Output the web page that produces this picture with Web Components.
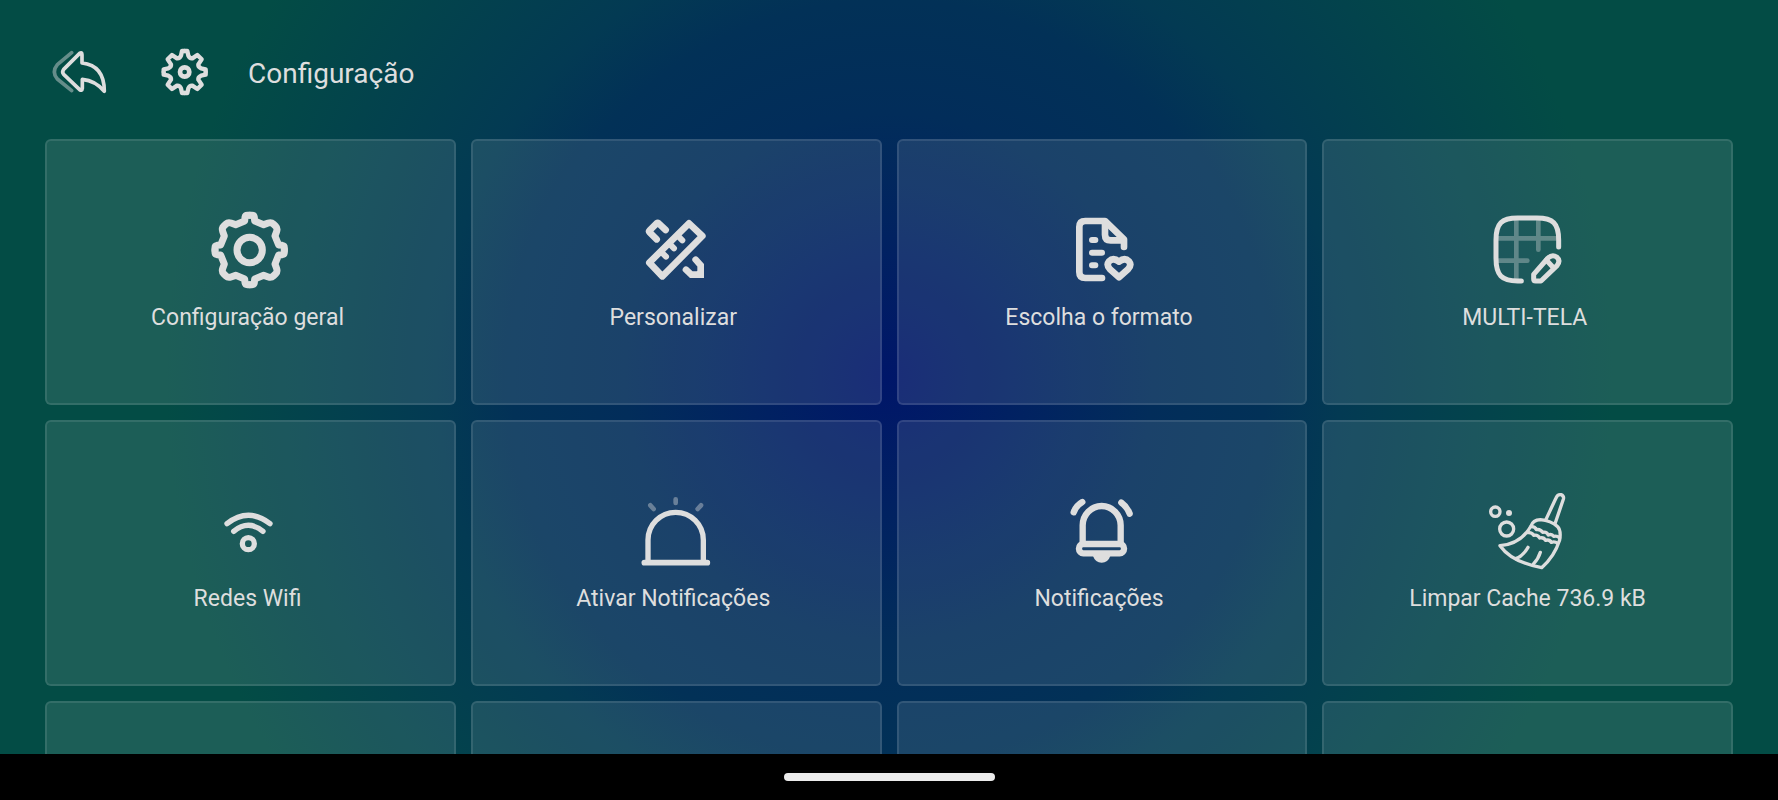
<!DOCTYPE html>
<html lang="pt">
<head>
<meta charset="utf-8">
<meta name="viewport" content="width=device-width, initial-scale=1">
<title>Configuração</title>
<style>
    body {
        margin: 0;
        background: #000;
        color: #dedede;
        font-family: Roboto, "Liberation Sans", sans-serif;
    }
    svg {
        display: block;
        width: 100%;
        height: 100%;
        fill: none;
        stroke: currentColor;
        stroke-linecap: round;
        stroke-linejoin: round;
    }
</style>
</head>
<body>
<settings-screen>
    <page-header slot="header" heading="Configuração"></page-header>

    <settings-tile label="Configuração geral ">
        <svg viewBox="61 60 240 240" stroke-width="21">
            <path id="cog" d="M180 76H187Q193 76 194 82L195 93L222 104L236 99Q245 96 251 102L258 109Q264 115 261 124L256 138L267 165L278 166Q284 167 284 173V180"/>
            <use href="#cog" transform="rotate(90 180 180)"/>
            <use href="#cog" transform="rotate(180 180 180)"/>
            <use href="#cog" transform="rotate(270 180 180)"/>
            <circle cx="180" cy="180" r="38"/>
        </svg>
    </settings-tile>

    <settings-tile label="Personalizar ">
        <svg viewBox="48 30 240 240" stroke-width="20">
            <path d="M207 70L247 108L127 229L88 188Z"/>
            <path d="M124 156l14 14M148 131l14 14M173 107l14 14" stroke-width="18"/>
            <path d="M137 90L116 70Q113 68 110 70L89 91Q86 94 89 97L110 118"/>
            <path d="M227 179L242 196V224H214L198 209" stroke-linejoin="miter"/>
            <path d="M243 208V225H226Z" stroke-width="8"/>
        </svg>
    </settings-tile>

    <settings-tile label="Escolha o formato ">
        <svg viewBox="36 30 240 240" stroke-width="20">
            <path d="M156 234H106Q88 234 88 216V81Q88 63 106 63H165L222 118V141"/>
            <path d="M165 66V104Q165 121 182 121H220"/>
            <path d="M126 120h10M126 158h30M126 196h10" stroke-width="18"/>
            <path d="M207 232L180 208Q168 195 177 184Q190 171 207 185Q224 171 237 184Q246 195 234 208Z"/>
        </svg>
    </settings-tile>

    <settings-tile label="MULTI-TELA ">
        <svg viewBox="53 30 240 240" stroke-width="15">
            <g opacity=".35" stroke-width="14">
                <path d="M138 62V236"/>
                <path d="M204 62V149"/>
                <path d="M84 115H258"/>
                <path d="M84 182H171"/>
            </g>
            <path d="M265 141V120C265 70 248 54 200 54H142C94 54 77 70 77 120V175C77 226 94 243 142 243H153"/>
            <path d="M190 223V237Q190 243 196 243H212L260 197Q272 182 259 171Q246 162 233 174Z"/>
            <path d="M228 180L250 204"/>
        </svg>
    </settings-tile>

    <settings-tile label="Redes Wifi ">
        <svg viewBox="31 3 240 240" stroke-width="16">
            <path d="M82 101Q146 51 211 101"/>
            <path d="M102 124Q146 88 190 124"/>
            <circle cx="146" cy="161" r="18"/>
        </svg>
    </settings-tile>

    <settings-tile label="Ativar Notificações ">
        <svg viewBox="48 33 240 240" stroke-width="16">
            <path d="M84 245V180A83 83 0 0 1 250 180V245"/>
            <path d="M73 248H262" stroke-width="17"/>
            <path d="M167 58V69M91 76L101 87M243 76L233 87" stroke-width="14" opacity=".4"/>
        </svg>
    </settings-tile>

    <settings-tile label="Notificações ">
        <svg viewBox="36 33 240 240" stroke-width="19">
            <path d="M98 188V136A57 58 0 0 1 212 136V188"/>
            <rect x="87" y="192" width="135" height="28" rx="13"/>
            <path d="M129 228Q136 248 155 248T181 228Z" fill="currentColor" stroke="none"/>
            <path d="M71 97Q78 77 97 66"/>
            <path d="M214 68Q232 81 239 101"/>
        </svg>
    </settings-tile>

    <settings-tile label="Limpar Cache 736.9 kB">
        <svg viewBox="53 33 240 240" stroke-width="10">
            <path d="M227 118L257 54Q262 42 272 44Q282 48 279 58L254 131"/>
            <path d="M182 138Q188 120 210 119Q242 122 262 140Q273 152 268 180Q252 230 214 263Q124 246 89 197Q152 192 182 138"/>
            <path d="M182 140Q194 139 198 149Q209 146 217 157Q229 154 234 165Q244 160 250 169Q260 166 268 174"/>
            <path d="M172 158Q185 156 190 166Q202 163 208 174Q220 171 226 181Q237 177 243 187Q253 183 262 190"/>
            <path d="M173 202Q158 228 136 236M210 217Q204 237 190 251"/>
            <circle cx="75" cy="95" r="14"/>
            <circle cx="109" cy="147" r="21"/>
            <circle cx="116" cy="99" r="9" fill="currentColor" stroke="none"/>
        </svg>
    </settings-tile>

    <settings-tile></settings-tile>
    <settings-tile></settings-tile>
    <settings-tile></settings-tile>
    <settings-tile></settings-tile>
</settings-screen>

<script>
class SettingsScreen extends HTMLElement {

    constructor() {
        super();
        this.attachShadow({ mode: 'open' });
        this.shadowRoot.innerHTML = `
            <style>
                :host {
                    display: flex;
                    flex-direction: column;
                    height: 100vh;
                }
                main {
                    flex: 1;
                    min-height: 0;
                    overflow: hidden;
                    background: radial-gradient(circle closest-side at center,
                        #001669 0%, #022d5a 70%, #023157 100%, #033a53 120%, #034c45 192%);
                }
                .grid {
                    display: grid;
                    grid-template-columns: repeat(4, 1fr);
                    grid-auto-rows: 266px;
                    gap: 15px;
                    padding: 0 45px;
                }
                footer {
                    flex: none;
                    display: flex;
                    justify-content: center;
                    align-items: center;
                    height: 46px;
                    background: #000;
                }
                .pill {
                    width: 211px;
                    height: 8px;
                    border-radius: 4px;
                    background: #ececec;
                }
            </style>
            <main>
                <slot name="header"></slot>
                <div class="grid"><slot></slot></div>
            </main>
            <footer><div class="pill"></div></footer>`;
    }
}

class PageHeader extends HTMLElement {

    constructor() {
        super();
        this.attachShadow({ mode: 'open' });
        this.shadowRoot.innerHTML = `
            <style>
                :host {
                    display: flex;
                    align-items: center;
                    box-sizing: border-box;
                    height: 139px;
                    padding: 5px 50px 0;
                }
                button {
                    padding: 0;
                    border: 0;
                    background: none;
                    color: inherit;
                    cursor: pointer;
                }
                svg {
                    display: block;
                    width: 60px;
                    height: 60px;
                    fill: none;
                    stroke: currentColor;
                    stroke-linecap: round;
                    stroke-linejoin: round;
                }
                .cog {
                    margin: 0 33px 0 45px;
                }
                h1 {
                    margin: 0;
                    padding-top: 2px;
                    font-size: 28px;
                    font-weight: 400;
                }
            </style>
            <button aria-label="Voltar">
                <svg viewBox="60 36 180 180" stroke-width="11">
                    <path d="M125 68L82 104Q64 126 82 147L125 182" opacity=".45"/>
                    <path d="M149 70Q156 65 156 74V99C205 104 223 138 223 184Q197 152 157 148V175Q156 184 149 179L101 133Q95 126 101 118Z"/>
                </svg>
            </button>
            <svg class="cog" viewBox="375 36 180 180" stroke-width="13" aria-hidden="true">
                <path id="tooth" d="M464 63H472L475 77Q479 86 487 85L502 75L515 88L505 103Q504 111 513 115L527 118V126"/>
                <use href="#tooth" transform="rotate(90 464 126)"/>
                <use href="#tooth" transform="rotate(180 464 126)"/>
                <use href="#tooth" transform="rotate(270 464 126)"/>
                <circle cx="464" cy="126" r="14" stroke-width="14"/>
            </svg>
            <h1></h1>`;
        this.shadowRoot.querySelector('h1').textContent = this.getAttribute('heading');
    }
}

class SettingsTile extends HTMLElement {

    constructor() {
        super();
        this.attachShadow({ mode: 'open' });
        this.shadowRoot.innerHTML = `
            <style>
                :host {
                    display: block;
                }
                button {
                    display: flex;
                    flex-direction: column;
                    align-items: center;
                    justify-content: center;
                    width: 100%;
                    height: 100%;
                    border: 2px solid rgba(255, 255, 255, .1);
                    border-radius: 6px;
                    background: rgba(255, 255, 255, .1);
                    color: inherit;
                    font-family: inherit;
                    font-size: 23px;
                    line-height: 32px;
                    cursor: pointer;
                }
                .icon {
                    width: 80px;
                    height: 80px;
                    margin-bottom: 12px;
                }
                .label {
                    white-space: pre;
                }
            </style>
            <button>
                <div class="icon"><slot></slot></div>
                <span class="label"></span>
            </button>`;
        this.shadowRoot.querySelector('.label').textContent = this.getAttribute('label') || '';
    }
}

window.customElements.define('settings-screen', SettingsScreen);
window.customElements.define('page-header', PageHeader);
window.customElements.define('settings-tile', SettingsTile);
</script>
</body>
</html>
